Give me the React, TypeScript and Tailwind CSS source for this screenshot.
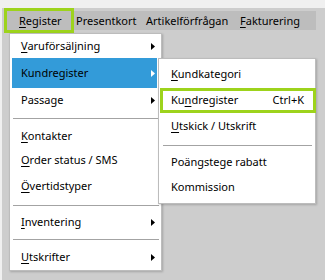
import React from 'react';

const font = { fontFamily: '"Noto Sans", "Open Sans", sans-serif' };

function Arrow({ white = false }: { white?: boolean }) {
  return (
    <svg width="4" height="7" viewBox="0 0 4 7" className="shrink-0">
      <polygon points="0,0 4,3.5 0,7" fill={white ? '#ffffff' : '#000000'} />
    </svg>
  );
}

// letter at `at` underlined (access key)
function Key({ label, at = 0 }: { label: string; at?: number }) {
  return (
    <span>
      {label.slice(0, at)}
      <span className="underline underline-offset-[2px] decoration-1">{label[at]}</span>
      {label.slice(at + 1)}
    </span>
  );
}

function MainRow({
  h,
  children,
  arrow,
  active,
}: {
  h: string;
  children: React.ReactNode;
  arrow?: boolean;
  active?: boolean;
}) {
  return (
    <div
      className={`${h} ml-[2px] mr-[4px] pl-[9px] pr-[2px] flex items-center justify-between ${
        active ? 'bg-[#339bd9]' : ''
      }`}
    >
      {children}
      {arrow && <Arrow white={active} />}
    </div>
  );
}

function Sep({ h }: { h: string }) {
  return (
    <div className={`${h} flex items-center ml-[3px] mr-[2px]`}>
      <div className="h-px w-full bg-[#a3a3a3]" />
    </div>
  );
}

export default function App() {
  return (
    <div
      className="relative w-[325px] h-[280px] overflow-hidden bg-[#f0f0f0] pt-[8px] pl-[2px] text-[11px] text-black"
      style={font}
    >
      <div className="h-full bg-[#cdcdcd] pt-[3px] pl-[3px]">
        {/* menu bar */}
        <div className="w-[311px] h-[19px] bg-[#bdbdbd] flex items-center pl-[14px] leading-none">
          <span className="w-[57px]">
            <Key label="Register" />
          </span>
          <span className="w-[70px]">Presentkort</span>
          <span className="w-[94px]">Artikelförfrågan</span>
          <span>
            <Key label="Fakturering" />
          </span>
        </div>
      </div>

      {/* green highlight around Register */}
      <div className="absolute left-[4px] top-[8px] w-[70px] h-[25px] border-[3px] border-[#9dd31c]" />

      {/* main dropdown */}
      <div className="absolute left-[9px] top-[33px] w-[153px] h-[238px] bg-white border border-[#bcbcbc] shadow-[1px_1px_2px_rgba(0,0,0,0.2)]">
        <MainRow h="h-[24px]" arrow>
          <Key label="Varuförsäljning" />
        </MainRow>
        <MainRow h="h-[30px]" arrow active>
          <span>Kundregister</span>
        </MainRow>
        <MainRow h="h-[24px]" arrow>
          <span>Passage</span>
        </MainRow>
        <Sep h="h-[12px]" />
        <MainRow h="h-[24px]">
          <Key label="Kontakter" />
        </MainRow>
        <MainRow h="h-[25px]">
          <Key label="Order status / SMS" />
        </MainRow>
        <MainRow h="h-[27px]">
          <Key label="Övertidstyper" />
        </MainRow>
        <Sep h="h-[10px]" />
        <MainRow h="h-[24px]" arrow>
          <Key label="Inventering" />
        </MainRow>
        <Sep h="h-[10px]" />
        <MainRow h="h-[26px]" arrow>
          <Key label="Utskrifter" />
        </MainRow>
      </div>

      {/* submenu */}
      <div className="absolute left-[158px] top-[58px] w-[158px] h-[146px] bg-white border border-[#bcbcbc] shadow-[1px_1px_2px_rgba(0,0,0,0.2)] pt-[1px]">
        <div className="h-[28px] flex items-center pl-[12px]">
          <Key label="Kundkategori" />
        </div>
        <div className="h-[25px] -mr-px ml-px border-[3px] border-[#9dd31c] flex items-center justify-between pl-[8px] pr-[9px]">
          <Key label="Kundregister" at={2} />
          <span>Ctrl+K</span>
        </div>
        <div className="h-[27px] flex items-center pl-[12px]">
          <Key label="Utskick / Utskrift" />
        </div>
        <div className="h-[10px] flex items-center ml-[4px] mr-[3px]">
          <div className="h-px w-full bg-[#a3a3a3]" />
        </div>
        <div className="h-[24px] flex items-center pl-[12px]">Poängstege rabatt</div>
        <div className="h-[26px] flex items-center pl-[12px]">Kommission</div>
      </div>
    </div>
  );
}
